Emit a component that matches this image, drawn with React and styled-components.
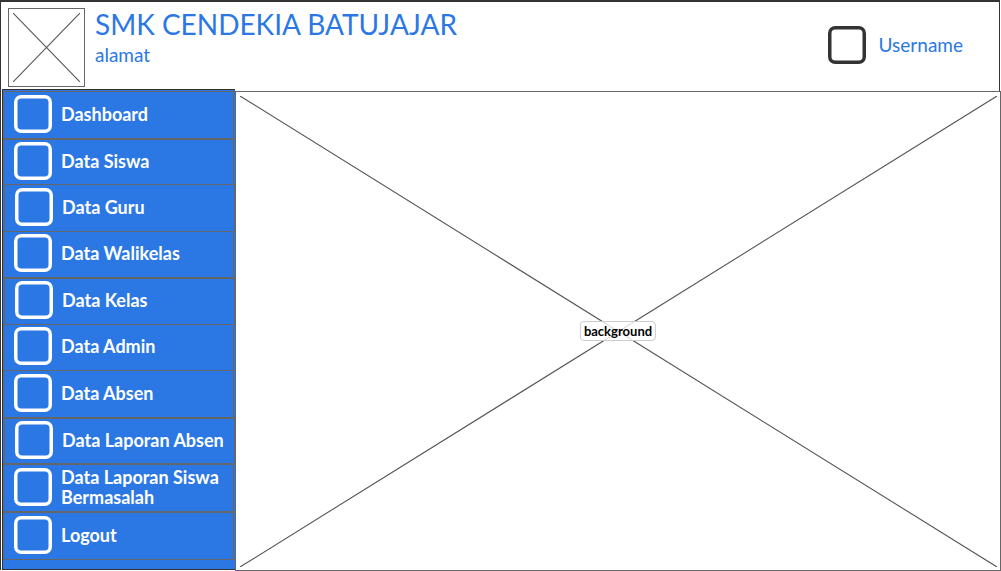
import React from "react";
import styled, { createGlobalStyle } from "styled-components";

const blue = "#2b78e4";
const dark = "#333333";
const line = "#666666";

const GlobalStyle = createGlobalStyle`
  *, *::before, *::after { box-sizing: border-box; }
  body {
    margin: 0;
    background: #ffffff;
    font-family: Lato, "Liberation Sans", sans-serif;
  }
`;

const Page = styled.div`
  display: flex;
  flex-direction: column;
  min-height: 100vh;
`;

const Header = styled.header`
  display: flex;
  justify-content: space-between;
  align-items: flex-start;
  min-height: 91px;
  margin-right: 1px;
  padding: 6px 36px 4px 7px;
  border: solid ${dark};
  border-width: 2px 1px 0;
`;

const Brand = styled.div`
  display: flex;
  gap: 10px;
`;

const Logo = styled.div`
  width: 77px;
  height: 79px;
  padding: 4px;
  border: 1px solid ${line};
`;

const CrossSvg = styled.svg`
  display: block;
  width: 100%;
  height: 100%;
  stroke: #555555;
  stroke-width: 1.1;
`;

const BrandText = styled.div`
  color: ${blue};
`;

const Title = styled.h1`
  margin: 0;
  font-size: 28px;
  line-height: 32px;
  font-weight: 400;
`;

const Address = styled.p`
  margin: 5px 0 0;
  font-size: 19px;
  line-height: 20px;
`;

const User = styled.a`
  display: flex;
  align-items: center;
  gap: 13px;
  margin-top: 18px;
  color: ${blue};
  font-size: 19px;
  line-height: 20px;
  text-decoration: none;
`;

const Icon = styled.svg`
  flex: none;
  width: 38px;
  height: 38px;
  fill: none;
  stroke: ${(p) => p.$color};
  stroke-width: 3.5;
`;

const Body = styled.div`
  display: flex;
  flex: 1;
`;

const SideFrame = styled.div`
  display: flex;
  flex: none;
  width: 235px;
  margin-bottom: 1px;
  padding-left: 1px;
  border: solid ${dark};
  border-width: 0 0 0 1px;
`;

const Sidebar = styled.nav`
  display: flex;
  flex: 1;
  margin-top: -2px;
  padding: 1px 0 9px;
  background: ${blue};
  border: solid ${dark};
  border-width: 1px 0 1px 1px;
`;

const Menu = styled.ul`
  display: flex;
  flex: 1;
  flex-direction: column;
  margin: 0;
  padding: 0;
  list-style: none;
  border-bottom: 1px solid ${line};
`;

const MenuItem = styled.li`
  display: flex;
  flex: ${(p) => (p.$tall ? "0 0 48px" : "1 0 46px")};
  margin: ${(p) => (p.$inset ? "0 0 0 1px" : "0 1px 0 0")};
  border: solid ${line};
  border-width: ${(p) => (p.$strong ? "2px" : "1px")} 1px 0;
`;

const MenuLink = styled.a`
  display: flex;
  flex: 1;
  align-items: center;
  gap: 9px;
  padding: 0 0 2px 10px;
  color: #ffffff;
  font-size: 18px;
  line-height: 20px;
  font-weight: 700;
  text-decoration: none;
`;

const Main = styled.main`
  position: relative;
  flex: 1;
  padding: 4px 3px 3px 4px;
  border: 1px solid ${line};
  display: flex;
`;

const Caption = styled.span`
  position: absolute;
  top: 50%;
  left: 50%;
  transform: translate(-50%, -50%);
  padding: 0 3px;
  border: 1px solid #cccccc;
  border-radius: 4px;
  background: rgba(255, 255, 255, 0.8);
  color: #000000;
  font-size: 13px;
  line-height: 18px;
  font-weight: 700;
`;

function SquareIcon({ color = "#ffffff" }) {
  return (
    <Icon $color={color} viewBox="0 0 38 38" aria-hidden="true">
      <rect x="1.75" y="1.75" width="34.5" height="34.5" rx="5.5" />
    </Icon>
  );
}

function Cross() {
  return (
    <CrossSvg aria-hidden="true">
      <line x1="0" y1="0" x2="100%" y2="100%" />
      <line x1="100%" y1="0" x2="0" y2="100%" />
    </CrossSvg>
  );
}

const items = [
  { label: "Dashboard" },
  { label: "Data Siswa", strong: true },
  { label: "Data Guru", inset: true },
  { label: "Data Walikelas" },
  { label: "Data Kelas", inset: true, strong: true },
  { label: "Data Admin" },
  { label: "Data Absen" },
  { label: "Data Laporan Absen", inset: true, strong: true },
  { label: "Data Laporan Siswa Bermasalah", strong: true, tall: true },
  { label: "Logout", strong: true, tall: true },
];

export default function App() {
  return (
    <Page>
      <GlobalStyle />
      <Header>
        <Brand>
          <Logo>
            <Cross />
          </Logo>
          <BrandText>
            <Title>SMK CENDEKIA BATUJAJAR</Title>
            <Address>alamat</Address>
          </BrandText>
        </Brand>
        <User href="#user">
          <SquareIcon color={dark} />
          Username
        </User>
      </Header>
      <Body>
        <SideFrame>
          <Sidebar>
            <Menu>
              {items.map((item) => (
                <MenuItem
                  key={item.label}
                  $inset={item.inset}
                  $strong={item.strong}
                  $tall={item.tall}
                >
                  <MenuLink href="#menu">
                    <SquareIcon />
                    <span>{item.label}</span>
                  </MenuLink>
                </MenuItem>
              ))}
            </Menu>
          </Sidebar>
        </SideFrame>
        <Main>
          <Cross />
          <Caption>background</Caption>
        </Main>
      </Body>
    </Page>
  );
}
